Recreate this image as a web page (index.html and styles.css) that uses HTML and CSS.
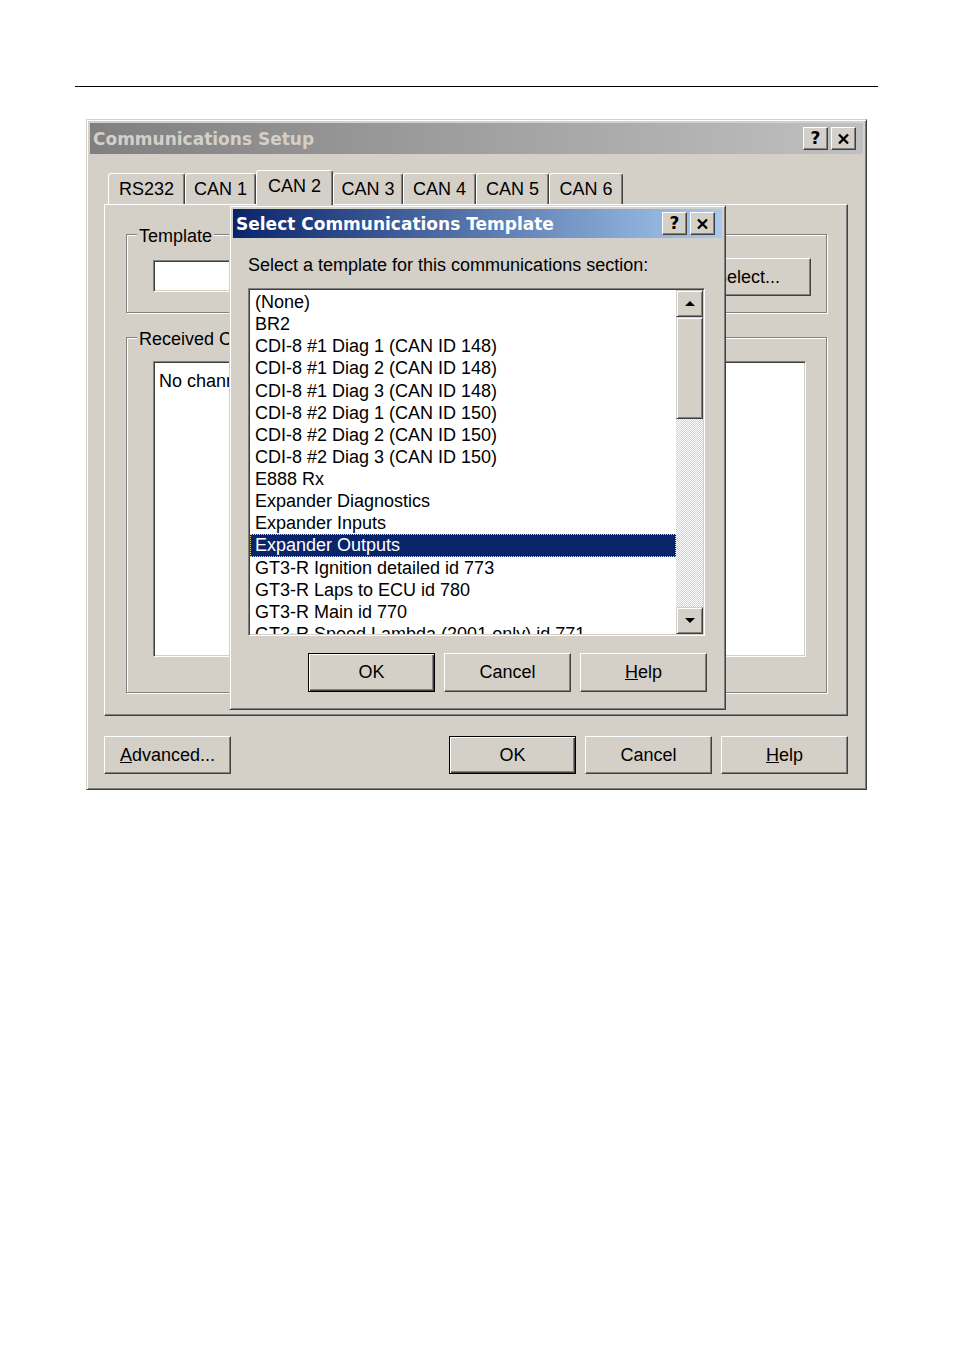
FILE: index.html
```html
<!DOCTYPE html>
<html>
<head>
<meta charset="utf-8">
<link rel="stylesheet" href="styles.css">
</head>
<body>
<div class="rule"></div>
<div class="win outer">
  <div class="titlebar inactive">
    <span class="title">Communications Setup</span>
    <div class="caps">
      <span class="capbtn">?</span>
      <span class="capbtn"><svg width="13" height="12" viewBox="0 0 13 12"><path d="M2 1.5 L11 10.5 M11 1.5 L2 10.5" stroke="#000" stroke-width="2.4" fill="none"/></svg></span>
    </div>
  </div>
  <div class="tabs">
    <div class="tab t-rs">RS232</div>
    <div class="tab t-c1">CAN 1</div>
    <div class="tab t-c2 sel">CAN 2</div>
    <div class="tab t-c3">CAN 3</div>
    <div class="tab t-c4">CAN 4</div>
    <div class="tab t-c5">CAN 5</div>
    <div class="tab t-c6">CAN 6</div>
  </div>
  <div class="panel">
    <div class="group g-template">
      <div class="legend">Template</div>
      <div class="grow">
        <div class="sunken textbox"></div>
        <div class="btn">Select...</div>
      </div>
    </div>
    <div class="group g-received">
      <div class="legend">Received CAN Data</div>
      <div class="sunken textarea">No channels defined</div>
    </div>
  </div>
  <div class="buttons">
    <div class="btn"><span><u>A</u>dvanced...</span></div>
    <div class="btn default push">OK</div>
    <div class="btn">Cancel</div>
    <div class="btn"><span><u>H</u>elp</span></div>
  </div>

  <div class="win dialog">
    <div class="titlebar active">
      <span class="title">Select Communications Template</span>
      <div class="caps">
        <span class="capbtn">?</span>
        <span class="capbtn"><svg width="13" height="12" viewBox="0 0 13 12"><path d="M2 1.5 L11 10.5 M11 1.5 L2 10.5" stroke="#000" stroke-width="2.4" fill="none"/></svg></span>
      </div>
    </div>
    <div class="dbody">
      <div class="label">Select a template for this communications section:</div>
      <div class="sunken listbox">
        <div class="items">
          <div class="item">(None)</div>
          <div class="item">BR2</div>
          <div class="item">CDI-8 #1 Diag 1 (CAN ID 148)</div>
          <div class="item">CDI-8 #1 Diag 2 (CAN ID 148)</div>
          <div class="item">CDI-8 #1 Diag 3 (CAN ID 148)</div>
          <div class="item">CDI-8 #2 Diag 1 (CAN ID 150)</div>
          <div class="item">CDI-8 #2 Diag 2 (CAN ID 150)</div>
          <div class="item">CDI-8 #2 Diag 3 (CAN ID 150)</div>
          <div class="item">E888 Rx</div>
          <div class="item">Expander Diagnostics</div>
          <div class="item">Expander Inputs</div>
          <div class="item selected">Expander Outputs</div>
          <div class="item">GT3-R Ignition detailed id 773</div>
          <div class="item">GT3-R Laps to ECU id 780</div>
          <div class="item">GT3-R Main id 770</div>
          <div class="item">GT3-R Speed Lambda (2001 only) id 771</div>
        </div>
        <div class="scrollbar">
          <div class="sbtn"><span class="arrow up"></span></div>
          <div class="thumb"></div>
          <div class="track"></div>
          <div class="sbtn"><span class="arrow down"></span></div>
        </div>
      </div>
      <div class="dbuttons">
        <div class="btn default">OK</div>
        <div class="btn">Cancel</div>
        <div class="btn"><span><u>H</u>elp</span></div>
      </div>
    </div>
  </div>
</div>
</body>
</html>
```

FILE: styles.css
```css
* { box-sizing: border-box; }

body {
  margin: 0;
  background: #fff;
  font-family: "Liberation Sans", Arial, sans-serif;
  font-size: 18px;
  color: #000;
}

.rule {
  margin: 86px 76px 0 75px;
  border-top: 1px solid #000;
}

.win {
  background: #d4d0c8;
  border: 1px solid;
  border-color: #d4d0c8 #404040 #404040 #d4d0c8;
  box-shadow: inset 1px 1px #fff, inset -1px -1px #808080;
  padding: 3px;
}

.outer {
  position: relative;
  width: 781px;
  height: 671px;
  margin: 32px 0 0 86px;
}

.titlebar {
  height: 31px;
  display: flex;
  align-items: center;
  justify-content: space-between;
  padding: 0 7px 0 3px;
}

.title {
  font-family: "DejaVu Sans", sans-serif;
  font-weight: bold;
  font-size: 17px;
  white-space: nowrap;
}

.inactive {
  background: linear-gradient(90deg, #808080, #c0c0c0);
  color: #d4d0c8;
}

.active {
  background: linear-gradient(90deg, #0a246a, #a6caf0);
  color: #fff;
  height: 29px;
}

.caps {
  display: flex;
  gap: 3px;
}

.capbtn {
  width: 25px;
  height: 23px;
  background: #d4d0c8;
  border: 1px solid;
  border-color: #fff #404040 #404040 #fff;
  box-shadow: inset -1px -1px #808080;
  display: flex;
  align-items: center;
  justify-content: center;
  font-family: "DejaVu Sans", sans-serif;
  font-weight: bold;
  font-size: 17px;
  color: #000;
  line-height: 1;
}

/* tabs */
.tabs {
  display: flex;
  align-items: flex-end;
  height: 34px;
  margin: 16px 0 0 14px;
  padding-left: 4px;
}

.tab {
  position: relative;
  height: 31px;
  display: flex;
  align-items: center;
  justify-content: center;
  background: #d4d0c8;
  border: 1px solid;
  border-bottom: 0;
  border-color: #fff #404040 transparent #fff;
  border-radius: 3px 3px 0 0;
  box-shadow: inset -1px 0 #808080;
  white-space: nowrap;
}

.tab.sel {
  height: 36px;
  margin-bottom: -2px;
  padding-bottom: 4px;
  z-index: 2;
}

.t-rs { width: 77px; }
.t-c1 { width: 71px; }
.t-c2 { width: 77px; }
.t-c3 { width: 70px; }
.t-c4 { width: 73px; }
.t-c5 { width: 73px; }
.t-c6 { width: 74px; }

.panel {
  width: 744px;
  height: 512px;
  margin-left: 14px;
  border: 1px solid;
  border-color: #fff #404040 #404040 #fff;
  box-shadow: inset -1px -1px #808080;
  padding: 29px 0 0 21px;
}

.group {
  width: 701px;
  border: 1px solid #808080;
  box-shadow: inset 1px 1px #fff, 1px 1px #fff;
}

.g-template { height: 79px; }

.g-received {
  height: 356px;
  margin-top: 24px;
}

.legend {
  width: fit-content;
  margin: -10px 0 0 10px;
  padding: 0 2px;
  background: #d4d0c8;
  line-height: 22px;
  white-space: nowrap;
}

.grow {
  display: flex;
  align-items: flex-start;
  justify-content: space-between;
  margin-top: 11px;
  padding: 0 15px 0 26px;
}

.sunken {
  background: #fff;
  border: 1px solid;
  border-color: #808080 #fff #fff #808080;
  box-shadow: inset 1px 1px #404040, inset -1px -1px #d4d0c8;
}

.textbox {
  width: 500px;
  height: 32px;
  margin-top: 2px;
}

.textarea {
  width: 653px;
  height: 296px;
  margin: 11px 0 0 26px;
  padding: 8px 5px;
  line-height: 22px;
  white-space: nowrap;
  overflow: hidden;
}

.btn {
  width: 127px;
  height: 38px;
  display: flex;
  align-items: center;
  justify-content: center;
  background: #d4d0c8;
  border: 1px solid;
  border-color: #fff #404040 #404040 #fff;
  box-shadow: inset -1px -1px #808080;
  white-space: nowrap;
  flex: none;
}

.btn.default {
  border-color: #000;
  box-shadow: inset 1px 1px #fff, inset -1px -1px #404040, inset -2px -2px #808080;
}

.buttons {
  display: flex;
  gap: 9px;
  margin-top: 20px;
  padding: 0 15px 0 14px;
}

.push { margin-left: auto; }

/* dialog */
.dialog {
  position: absolute;
  left: 142px;
  top: 85px;
  width: 497px;
  height: 505px;
  z-index: 5;
}

.dbody {
  padding-left: 15px;
}

.label {
  margin-top: 16px;
  line-height: 22px;
  white-space: nowrap;
}

.listbox {
  display: flex;
  width: 457px;
  height: 348px;
  margin-top: 12px;
  padding: 1px;
}

.items {
  flex: 1;
  overflow: hidden;
  padding-top: 1px;
}

.item {
  line-height: 22.14px;
  height: 22.14px;
  padding-left: 5px;
  white-space: nowrap;
}

.item.selected {
  background: #0a246a;
  color: #fff;
  outline: 1px dotted #e6d58a;
  outline-offset: -1px;
}

.scrollbar {
  width: 27px;
  display: flex;
  flex-direction: column;
}

.sbtn, .thumb {
  background: #d4d0c8;
  border: 1px solid;
  border-color: #d4d0c8 #404040 #404040 #d4d0c8;
  box-shadow: inset 1px 1px #fff, inset -1px -1px #808080;
}

.sbtn {
  height: 27px;
  display: flex;
  align-items: center;
  justify-content: center;
}

.thumb { height: 102px; }

.track {
  flex: 1;
  background-color: #d4d0c8;
  background-image: conic-gradient(#fff 25%, #d4d0c8 0 50%, #fff 0 75%, #d4d0c8 0);
  background-size: 2px 2px;
}

.arrow {
  width: 0;
  height: 0;
  border-left: 5px solid transparent;
  border-right: 5px solid transparent;
}

.arrow.up { border-bottom: 5px solid #000; }
.arrow.down { border-top: 5px solid #000; }

.dbuttons {
  display: flex;
  justify-content: flex-end;
  gap: 9px;
  margin-top: 17px;
  padding-right: 15px;
}

.dbuttons .btn { height: 39px; }
```
